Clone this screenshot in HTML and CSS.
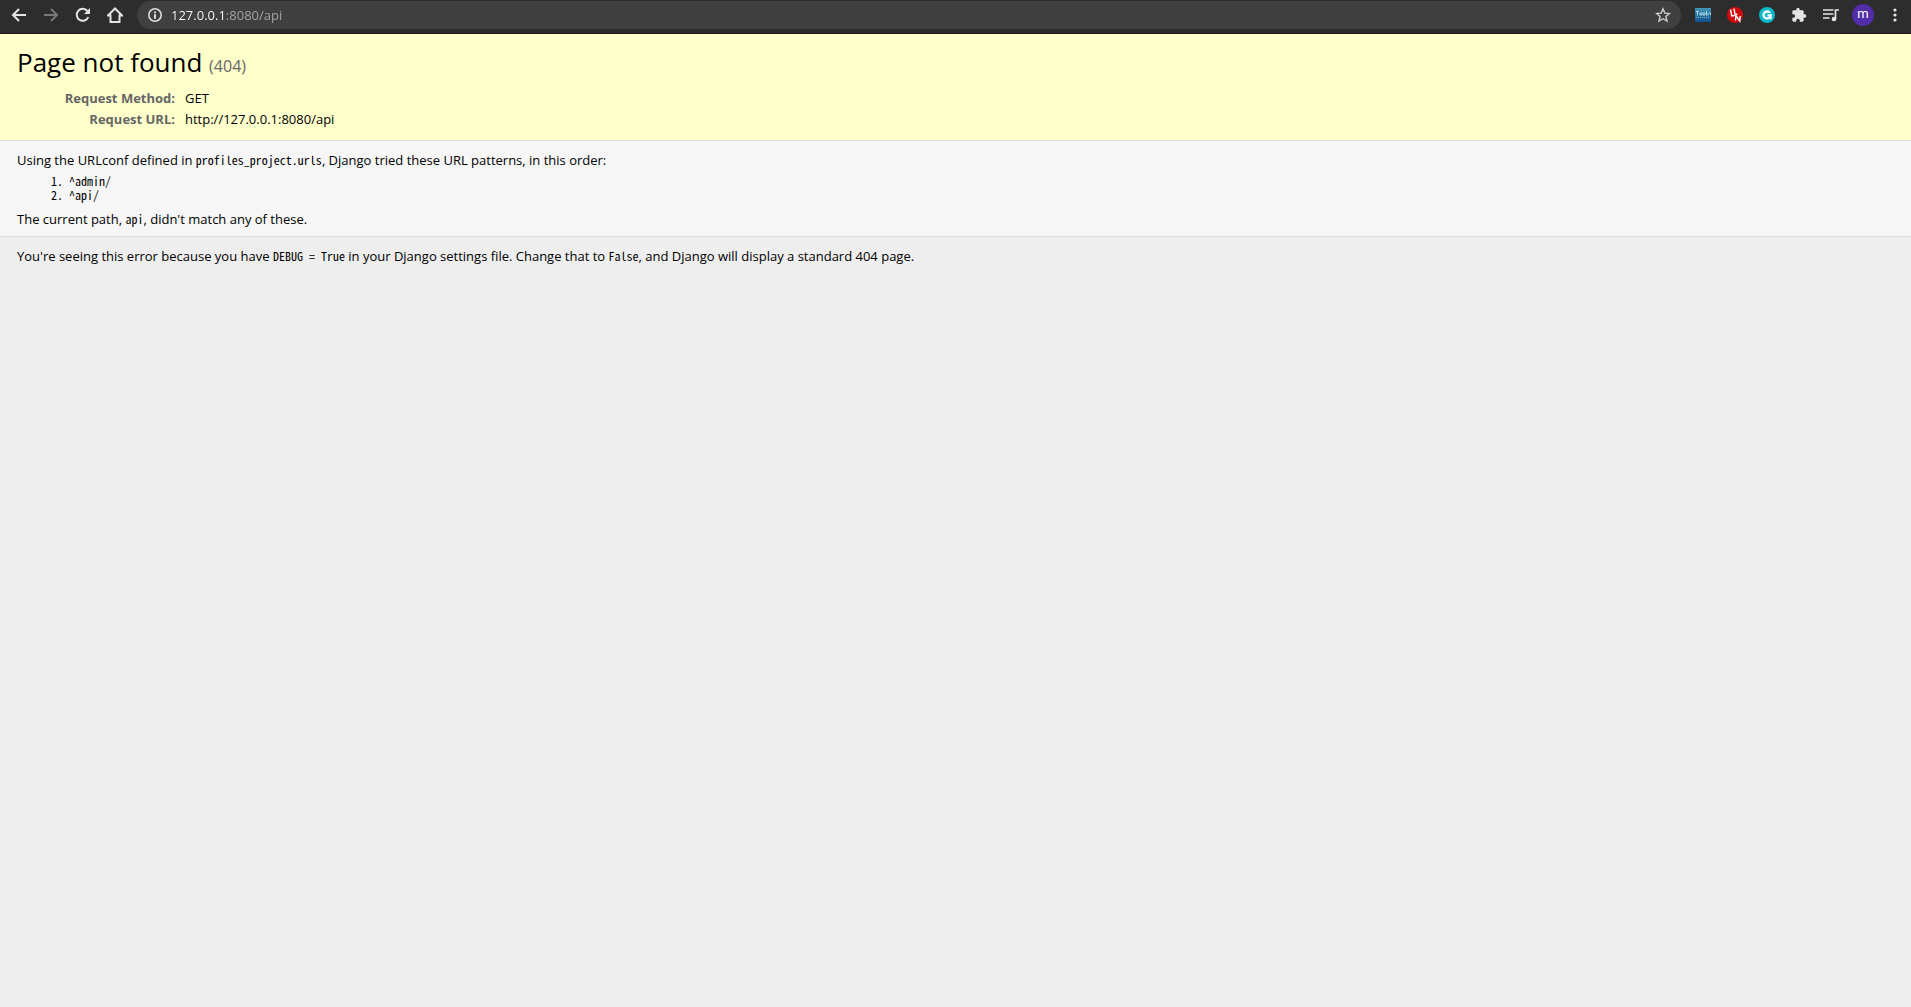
FILE: index.html
```html
<!DOCTYPE html>
<html lang="en">
<head>
  <meta charset="UTF-8">
  <meta name="viewport" content="width=device-width, initial-scale=1.0">
  <title>Page not found at /api</title>
  <link rel="stylesheet" href="styles.css">
</head>
<body>

  <div class="toolbar">
    <button class="tool" aria-label="Back">
      <svg viewBox="0 0 16 16"><path d="M15 8H2M8 2L2 8l6 6" fill="none" stroke="currentColor" stroke-width="2"/></svg>
    </button>
    <button class="tool disabled" aria-label="Forward" disabled>
      <svg viewBox="0 0 16 16"><path d="M1 8h13M8 2l6 6-6 6" fill="none" stroke="currentColor" stroke-width="2"/></svg>
    </button>
    <button class="tool" aria-label="Reload">
      <svg viewBox="0 0 16 16"><path d="M13.3 10A6 6 0 1 1 12.4 4" fill="none" stroke="currentColor" stroke-width="2"/><path d="M15 1v6H9z" fill="currentColor"/></svg>
    </button>
    <button class="tool" aria-label="Home">
      <svg viewBox="0 0 16 16"><path d="M1 8.5L8 1.5l7 7H12.5V15h-9V8.5z" fill="none" stroke="currentColor" stroke-width="2"/></svg>
    </button>

    <div class="address">
      <svg class="info-icon" viewBox="0 0 16 16"><circle cx="8" cy="8" r="6.2" fill="none" stroke="currentColor" stroke-width="1.6"/><path d="M7 4.5h2v1.700H7zM7 7.3h2v4.4H7z" fill="currentColor"/></svg>
      <input class="url" type="text" value="127.0.0.1:8080/api" aria-label="Address">
      <button class="tool star" aria-label="Bookmark this page">
        <svg viewBox="0 0 16 16"><path d="M8 1.8l1.8 4.3 4.6.4-3.5 3 1.1 4.6L8 11.7l-4 2.400 1.100-4.600-3.500-3 4.600-.4z" fill="none" stroke="currentColor" stroke-width="1.4"/></svg>
      </button>
    </div>

    <button class="tool" aria-label="Tooltip Dictionary">
      <svg viewBox="0 0 16 16">
        <defs><linearGradient id="tip" x1="0" y1="0" x2="0" y2="1"><stop offset="0" stop-color="#4399b8"/><stop offset="1" stop-color="#12508c"/></linearGradient></defs>
        <path d="M0 1h16v14H0z" fill="url(#tip)"/>
        <path d="M1 4.5h3M2.5 4.500v4M5 6h2v2H5zM8 6h2v2H8zM11.5 4v4.500M13 6v2.500M14 6h1.500v2" fill="none" stroke="#a9d3e6"/>
        <path d="M1 10.500h14" stroke="#6ba8d0" stroke-dasharray="1 1"/>
      </svg>
    </button>
    <button class="tool" aria-label="Language Learning">
      <svg viewBox="0 0 16 16"><circle cx="8" cy="8" r="8" fill="#d3080c"/><path d="M3.5 2.500l1.300 6.500 2.700-.5M7 1.500l1 6 2.500-.3M8.500 13.500l.3-5 4 5.500.4-5" fill="none" stroke="#fff" stroke-width="1.4"/></svg>
    </button>
    <button class="tool" aria-label="Extension">
      <svg viewBox="0 0 16 16"><circle cx="8" cy="8" r="8" fill="#09b9c8"/><circle cx="8" cy="8" r="3.500" fill="none" stroke="#fff" stroke-width="2.300"/><path d="M8.500 7.300h4.200v5h-2.200V9.200h-2z" fill="#fff"/><path d="M9 6.500h4.500" stroke="#09b9c8"/></svg>
    </button>
    <button class="tool" aria-label="Extensions">
      <svg viewBox="0 0 24 24"><path fill="currentColor" d="M20.5 11H19V7c0-1.100-.9-2-2-2h-4V3.500a2.500 2.500 0 0 0-5 0V5H4c-1.100 0-2 .9-2 2v3.800h1.500a2.700 2.700 0 0 1 0 5.400H2V20c0 1.100.9 2 2 2h3.800v-1.500a2.700 2.700 0 0 1 5.400 0V22H17c1.100 0 2-.9 2-2v-4h1.500a2.500 2.500 0 0 0 0-5z"/></svg>
    </button>
    <button class="tool" aria-label="Media controls">
      <svg viewBox="0 0 16 16"><path d="M0 3h10.500M0 7h10.500M0 11h6.500M12.500 12V3H16" fill="none" stroke="currentColor" stroke-width="1.7"/><circle cx="11" cy="12" r="2.300" fill="currentColor"/></svg>
    </button>
    <button class="tool" aria-label="Profile"><span class="avatar">m</span></button>
    <button class="tool" aria-label="Menu">
      <svg viewBox="0 0 16 16" fill="currentColor"><circle cx="8" cy="3" r="1.600"/><circle cx="8" cy="8" r="1.600"/><circle cx="8" cy="13" r="1.600"/></svg>
    </button>
  </div>

  <div id="summary">
    <h1>Page not found <span>(404)</span></h1>
    <table class="meta">
      <tr>
        <th scope="row">Request Method:</th>
        <td>GET</td>
      </tr>
      <tr>
        <th scope="row">Request URL:</th>
        <td>http://127.0.0.1:8080/api</td>
      </tr>
    </table>
  </div>

  <div id="info">
    <p>Using the URLconf defined in <code>profiles_project.urls</code>, Django tried these URL patterns, in this order:</p>
    <ol>
      <li>^admin/</li>
      <li>^api/</li>
    </ol>
    <p>The current path, <code>api</code>, didn't match any of these.</p>
  </div>

  <div id="explanation">
    <p>You're seeing this error because you have <code>DEBUG = True</code> in your Django settings file. Change that to <code>False</code>, and Django will display a standard 404 page.</p>
  </div>

</body>
</html>
```

FILE: styles.css
```css
* { box-sizing: border-box; margin: 0; padding: 0; }
body {
  font-family: "Open Sans", "Noto Sans", sans-serif;
  font-size: 13px;
  line-height: 18px;
  background: #eee;
  color: #000;
}

/* browser bar */
.toolbar {
  display: flex;
  align-items: center;
  height: 34px;
  padding: 0 0 3px 3px;
  background: #2d2d2d;
  border-bottom: 1px solid #1c1520;
}
.tool {
  flex: none;
  display: flex;
  align-items: center;
  justify-content: center;
  width: 32px;
  height: 28px;
  border: 0;
  background: none;
  color: #e4e4e4;
}
.tool svg, .info-icon {
  flex: none;
  width: 16px;
  height: 16px;
}
.tool.disabled { color: #777; }
.address {
  flex: 1;
  display: flex;
  align-items: center;
  height: 28px;
  margin: 0 6px;
  padding: 0 2px 0 10px;
  border-radius: 14px;
  background: #404040;
  color: #ddd;
}
.url {
  flex: 1;
  margin-left: 8px;
  border: 0;
  outline: 0;
  font: 13px/20px "Open Sans", sans-serif;
  color: #fff;
  /* host is white, port and path are grey */
  background: linear-gradient(to right, #fff 55px, #a6a6a6 55px);
  -webkit-background-clip: text;
  background-clip: text;
  -webkit-text-fill-color: transparent;
}
.tool.star { color: #ccc; }
.avatar {
  width: 22px;
  height: 22px;
  border-radius: 50%;
  background: #512da8;
  color: #fff;
  font: 13px/20px Roboto, sans-serif;
  text-align: center;
}

/* django page */
#summary, #info, #explanation { padding: 10px 17px; }
#summary {
  background: #ffc;
  border-bottom: 1px solid #ddd;
}
h1 {
  margin-bottom: 8px;
  font-size: 26px;
  line-height: 36px;
  font-weight: normal;
}
h1 span {
  font-size: 16px;
  line-height: 16px;
  color: #666;
}
.meta {
  width: 100%;
  border-collapse: collapse;
}
.meta th, .meta td {
  padding: 1px 0 2px;
  vertical-align: top;
}
.meta th {
  width: 168px;
  padding-right: 10px;
  text-align: right;
  color: #666;
}
#info {
  padding-bottom: 8px;
  background: #f6f6f6;
  border-bottom: 1px solid #ddd;
}
#info ol { margin: 5px 52px 8px; }
code, #info ol {
  font-family: "Noto Sans CJK KR", monospace;
  font-size: 12px;
  line-height: 14px;
  /* half-width latin, no fi ligature */
  font-feature-settings: "hwid", "liga" 0;
}
```
